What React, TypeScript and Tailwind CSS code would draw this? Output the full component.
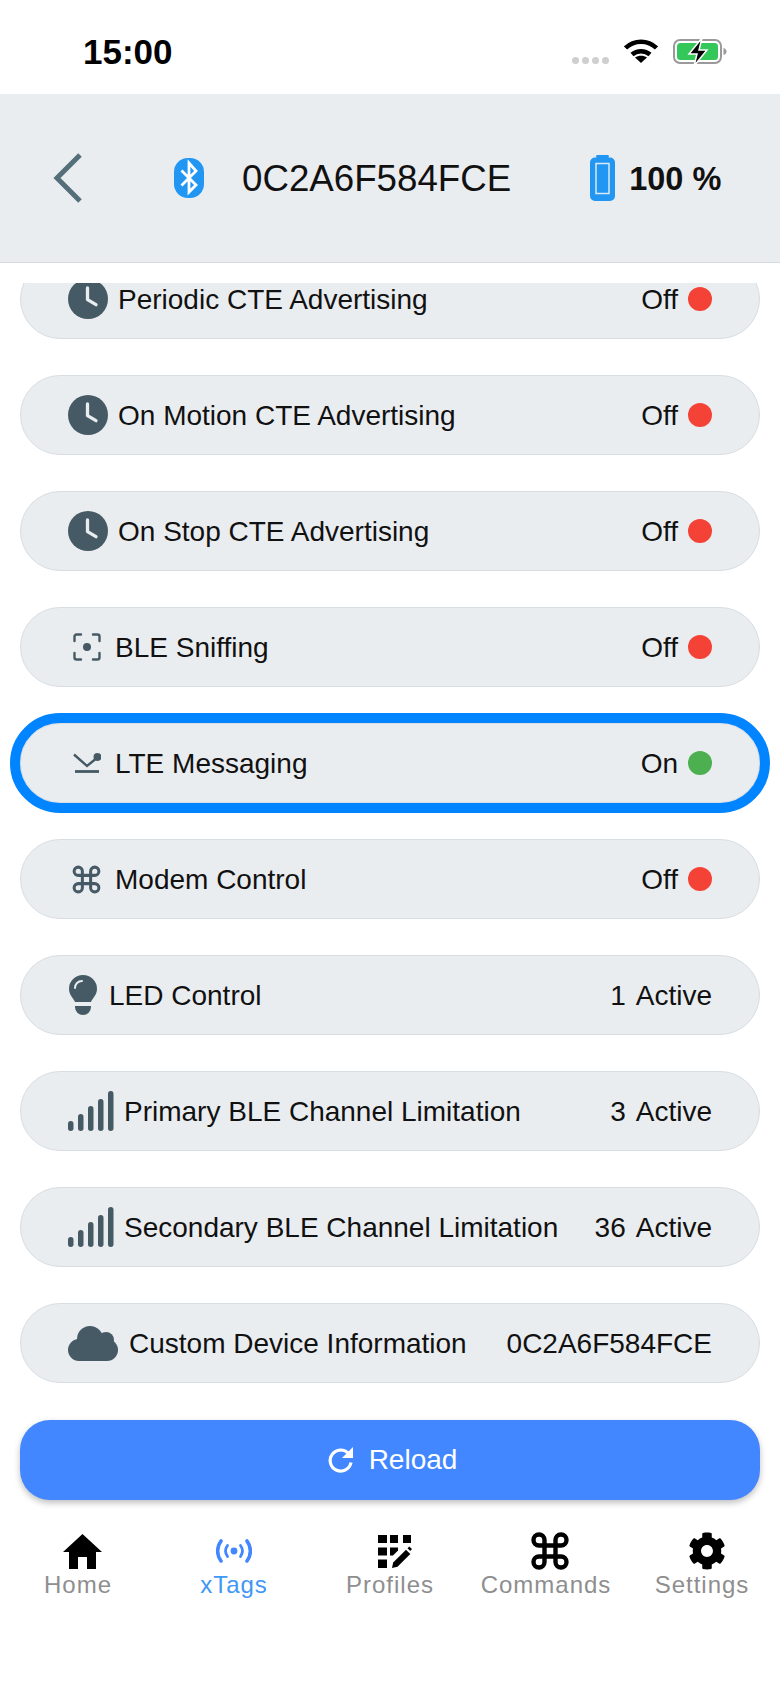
import React from 'react';
import { FaCog } from 'react-icons/fa';
import { Command } from 'lucide-react';

const SLATE = '#455a64';

function ClockIcon() {
  return (
    <svg viewBox="0 0 40 40" className="w-[40px] h-[40px]" fill="none">
      <circle cx="20" cy="20" r="20" fill={SLATE} />
      <path d="M19.500 9v11.700l8.500 5" stroke="#eaedf0" strokeWidth="3.300" strokeLinejoin="round" strokeLinecap="round" />
    </svg>
  );
}

function ScanIcon() {
  return (
    <svg viewBox="0 0 28 28" className="w-[28px] h-[28px]" fill="none" stroke={SLATE} strokeWidth="2.400" strokeLinecap="round" strokeLinejoin="round">
      <path d="M1.500 8V3.500a2 2 0 0 1 2-2H8" />
      <path d="M20 1.500h4.500a2 2 0 0 1 2 2V8" />
      <path d="M1.500 20v4.500a2 2 0 0 0 2 2H8" />
      <path d="M20 26.500h4.500a2 2 0 0 0 2-2V20" />
      <circle cx="14" cy="14" r="4" fill={SLATE} stroke="none" />
    </svg>
  );
}

function LteIcon() {
  return (
    <svg viewBox="0 0 28 20" className="w-[28px] h-[20px]" fill="none" stroke={SLATE} strokeWidth="2.400">
      <path d="M2 18.500h24" strokeWidth="2.800" />
      <path d="M1 1.500l13 11.500 8-6.500" />
      <circle cx="24.500" cy="4" r="4" fill={SLATE} stroke="none" />
    </svg>
  );
}

function BulbIcon() {
  return (
    <svg viewBox="0 0 28 40" className="w-[28px] h-[40px] ml-[1px]" fill={SLATE}>
      <path d="M14 0a14 14 0 0 1 14 14c0 6-4.500 9-6 13H6C4.500 23 0 20 0 14A14 14 0 0 1 14 0z" />
      <path d="M6 31h16v1a8 8 0 0 1-8 8 8 8 0 0 1-8-8z" />
      <path d="M6 13c0-4 3-7 7-7" fill="none" stroke="#eaedf0" strokeWidth="2" strokeLinecap="round" />
    </svg>
  );
}

function SignalIcon() {
  return (
    <svg viewBox="0 0 46 40" className="w-[46px] h-[40px]" fill={SLATE}>
      <rect x="0" y="30" width="5.500" height="10" rx="2.700" />
      <rect x="10" y="23" width="5.500" height="17" rx="2.700" />
      <rect x="20" y="15" width="5.500" height="25" rx="2.700" />
      <rect x="30" y="8" width="5.500" height="32" rx="2.700" />
      <rect x="40" y="0" width="5.500" height="40" rx="2.700" />
    </svg>
  );
}

function CloudIcon() {
  return (
    <svg viewBox="0 0 50 35" className="w-[50px] h-[35px]" fill={SLATE}>
      <circle cx="11" cy="24" r="11" />
      <circle cx="22" cy="13" r="13" />
      <circle cx="38" cy="14" r="8" />
      <circle cx="39" cy="24" r="11" />
      <rect x="11" y="13" width="28" height="22" />
    </svg>
  );
}

function ReloadIcon() {
  return (
    <svg viewBox="0 0 27 26" className="w-[27px] h-[26px]" fill="none">
      <path d="M21.500 6.500A10.500 10.500 0 1 0 24 15.500" stroke="#fff" strokeWidth="3.200" />
      <path d="M26 0v11H15z" fill="#fff" />
    </svg>
  );
}

function HomeIcon() {
  return (
    <svg viewBox="0 0 39 35" className="w-[39px] h-[35px]" fill="#000">
      <path d="M19.500 0L39 18h-6v17h-9V23h-9v12H6V18H0z" />
    </svg>
  );
}

function AntennaIcon() {
  return (
    <svg viewBox="0 0 36 24" className="w-[36px] h-[24px]" fill="none" stroke="#4287ff" strokeLinecap="round">
      <circle cx="18" cy="12" r="3.400" fill="#4287ff" stroke="none" />
      <path d="M11.500 6.500c-2.500 3.500-2.500 7.500 0 11" strokeWidth="2.800" />
      <path d="M24.500 6.500c2.500 3.500 2.500 7.500 0 11" strokeWidth="2.800" />
      <path d="M5 2c-4.500 6-4.500 14 0 20" strokeWidth="3.600" />
      <path d="M31 2c4.500 6 4.500 14 0 20" strokeWidth="3.600" />
    </svg>
  );
}

function ProfilesIcon() {
  return (
    <svg viewBox="0 0 34 33" className="w-[34px] h-[33px]" fill="#000">
      <rect x="0" y="0" width="9" height="8" />
      <rect x="12" y="0" width="8" height="8" />
      <rect x="25" y="0" width="8" height="8" />
      <rect x="0" y="12.500" width="9" height="8" />
      <path d="M12 12.500h8v3l-5 5h-3z" />
      <rect x="0" y="24.500" width="9" height="8.500" />
      <path d="M14 33l1.200-5.500L28 14.700l4.300 4.300L19.500 31.800z" />
      <path d="M29.500 13.200l1.800-1.800 2.700 2.700-1.800 1.800z" />
    </svg>
  );
}

function StatusBar() {
  return (
    <div className="h-[94px] bg-white flex items-start relative">
      <span className="ml-[83px] mt-[33px] text-[35px] leading-[38px] font-bold text-black">15:00</span>
      <div className="ml-auto mr-[53px] mt-[38px] flex items-start">
        <div className="flex gap-[3px] mt-[19px] mr-[15px]">
          <div className="w-[7px] h-[7px] rounded-full bg-[#cfcfcf]" />
          <div className="w-[7px] h-[7px] rounded-full bg-[#cfcfcf]" />
          <div className="w-[7px] h-[7px] rounded-full bg-[#cfcfcf]" />
          <div className="w-[7px] h-[7px] rounded-full bg-[#cfcfcf]" />
        </div>
        <svg viewBox="0 0 34 25" className="w-[34px] h-[25px] mr-[15px]" fill="none" stroke="#000" strokeWidth="4.500">
          <path d="M1.500 10C10 1.500 24 1.500 32.500 10" />
          <path d="M8 16.500c5-4.500 13-4.500 18 0" />
          <path d="M17 25l-6-5.500c3.500-2.500 8.500-2.500 12 0z" fill="#000" stroke="none" />
        </svg>
        <svg viewBox="0 0 54 28" className="w-[54px] h-[28px]">
          <rect x="1" y="2" width="47" height="23" rx="6" fill="none" stroke="#9a9a9a" strokeWidth="2" />
          <rect x="4" y="5" width="41" height="17" rx="3.500" fill="#34c759" />
          <path d="M50.500 10v7c2-.5 3-2 3-3.500s-1-3-3-3.500z" fill="#9a9a9a" />
          <path d="M29 0L16 16h8l-3 12 13-16h-8z" fill="#000" stroke="#fff" strokeWidth="1.500" />
        </svg>
      </div>
    </div>
  );
}

function Header() {
  return (
    <div className="h-[169px] bg-[#eaedf0] border-b border-[#d6dadd] flex items-center">
      <svg viewBox="0 0 30 50" className="ml-[53px] w-[30px] h-[50px]" fill="none" stroke="#546e7a" strokeWidth="5">
        <path d="M27 2L4 25l23 23" />
      </svg>
      <svg viewBox="0 0 30 40" className="ml-[91px] w-[30px] h-[40px]">
        <rect x="0" y="0" width="30" height="40" rx="14" fill="#2196f3" />
        <path d="M7.500 12.500L22 27l-7 7V5l7 8L7.500 27.500" fill="none" stroke="#fff" strokeWidth="2.800" />
      </svg>
      <span className="ml-[38px] mt-[2px] text-[36.700px] text-[#111] leading-none">0C2A6F584FCE</span>
      <svg viewBox="0 0 25 46" className="ml-[79px] w-[25px] h-[46px]">
        <path d="M8 0h9a1 1 0 0 1 1 2.500h2a5 5 0 0 1 5 5V41a5 5 0 0 1-5 5H5a5 5 0 0 1-5-5V7.500a5 5 0 0 1 5-5h2A1 1 0 0 1 8 0z" fill="#2196f3" />
        <rect x="6" y="8.500" width="13" height="30" fill="#2196f3" stroke="#dce9f3" strokeWidth="1.500" />
      </svg>
      <span className="ml-[14px] mt-[2px] text-[32.500px] font-bold text-[#111] leading-none">100 %</span>
    </div>
  );
}

function Dot({ on }: { on?: boolean }) {
  return <div className={on ? 'w-[24px] h-[24px] rounded-full bg-[#4caf50]' : 'w-[24px] h-[24px] rounded-full bg-[#f44336]'} />;
}

function Row({ icon, label, gap, right, className = '' }: { icon: React.ReactNode; label: string; gap: string; right: React.ReactNode; className?: string }) {
  return (
    <div className={`h-[80px] shrink-0 rounded-[40px] bg-[#eaedf0] border border-[#d8dde1] flex items-center pl-[47px] pr-[47px] text-[28px] text-[#111] ${className}`}>
      <div className={`flex items-center ${gap}`}>
        {icon}
        <span className="mt-[2px]">{label}</span>
      </div>
      <div className="ml-auto flex items-center">{right}</div>
    </div>
  );
}

const Off = () => (
  <div className="flex items-center gap-[10px]">
    <span className="mt-[2px]">Off</span>
    <Dot />
  </div>
);

const Active = ({ n }: { n: string }) => (
  <div className="flex items-center gap-[10px] mt-[2px]">
    <span>{n}</span>
    <span>Active</span>
  </div>
);

const boxed = (el: React.ReactNode) => <div className="w-[37px] flex justify-center pr-[2px] pl-[2px]">{el}</div>;

const TABS = [
  { label: 'Home', icon: <HomeIcon />, active: false, shift: 'ml-[8px]' },
  { label: 'xTags', icon: <AntennaIcon />, active: true, shift: '' },
  { label: 'Profiles', icon: <ProfilesIcon />, active: false, shift: 'ml-[10px]' },
  { label: 'Commands', icon: <Command size={44} color="#000" strokeWidth={2.400} />, active: false, shift: 'ml-[7px]' },
  { label: 'Settings', icon: <FaCog size={38} color="#000" />, active: false, shift: 'ml-[10px]' },
];

export default function App() {
  return (
    <div className="w-[780px] h-[1688px] bg-white flex flex-col overflow-hidden font-['Liberation_Sans',Arial,sans-serif]">
      <StatusBar />
      <Header />
      <div className="mt-[20px] h-[1101px] overflow-hidden px-[20px] flex flex-col gap-[36px]">
        <Row className="-mt-[24px]" icon={<ClockIcon />} gap="gap-[10px]" label="Periodic CTE Advertising" right={<Off />} />
        <Row icon={<ClockIcon />} gap="gap-[10px]" label="On Motion CTE Advertising" right={<Off />} />
        <Row icon={<ClockIcon />} gap="gap-[10px]" label="On Stop CTE Advertising" right={<Off />} />
        <Row icon={boxed(<ScanIcon />)} gap="gap-[10px]" label="BLE Sniffing" right={<Off />} />
        <Row
          className="outline-[10px] outline-solid outline-[#0084ff]"
          icon={boxed(<LteIcon />)}
          gap="gap-[10px]"
          label="LTE Messaging"
          right={
            <div className="flex items-center gap-[10px]">
              <span className="mt-[2px]">On</span>
              <Dot on />
            </div>
          }
        />
        <Row icon={boxed(<Command size={33} color={SLATE} strokeWidth={2.200} />)} gap="gap-[10px]" label="Modem Control" right={<Off />} />
        <Row icon={<BulbIcon />} gap="gap-[12px]" label="LED Control" right={<Active n="1" />} />
        <Row icon={<SignalIcon />} gap="gap-[10px]" label="Primary BLE Channel Limitation" right={<Active n="3" />} />
        <Row icon={<SignalIcon />} gap="gap-[10px]" label="Secondary BLE Channel Limitation" right={<Active n="36" />} />
        <Row icon={<CloudIcon />} gap="gap-[11px]" label="Custom Device Information" right={<span className="mt-[2px]">0C2A6F584FCE</span>} />
      </div>
      <div className="px-[20px] mt-[36px]">
        <div className="h-[80px] pl-[4px] rounded-[30px] bg-[#4287ff] shadow-[0_3px_6px_rgba(0,0,0,0.25)] flex items-center justify-center gap-[15px] text-white text-[28px]">
          <ReloadIcon />
          <span>Reload</span>
        </div>
      </div>
      <div className="mt-[32px] grid grid-cols-5">
        {TABS.map((t) => (
          <div key={t.label} className="flex flex-col items-center">
            <div className={`h-[38px] flex items-center justify-center ${t.shift}`}>{t.icon}</div>
            <span className={t.active ? 'mt-[1px] text-[24px] leading-[28px] tracking-[1px] text-[#3f97f6]' : 'mt-[1px] text-[24px] leading-[28px] tracking-[1px] text-[#8e8e8f]'}>
              {t.label}
            </span>
          </div>
        ))}
      </div>
    </div>
  );
}
